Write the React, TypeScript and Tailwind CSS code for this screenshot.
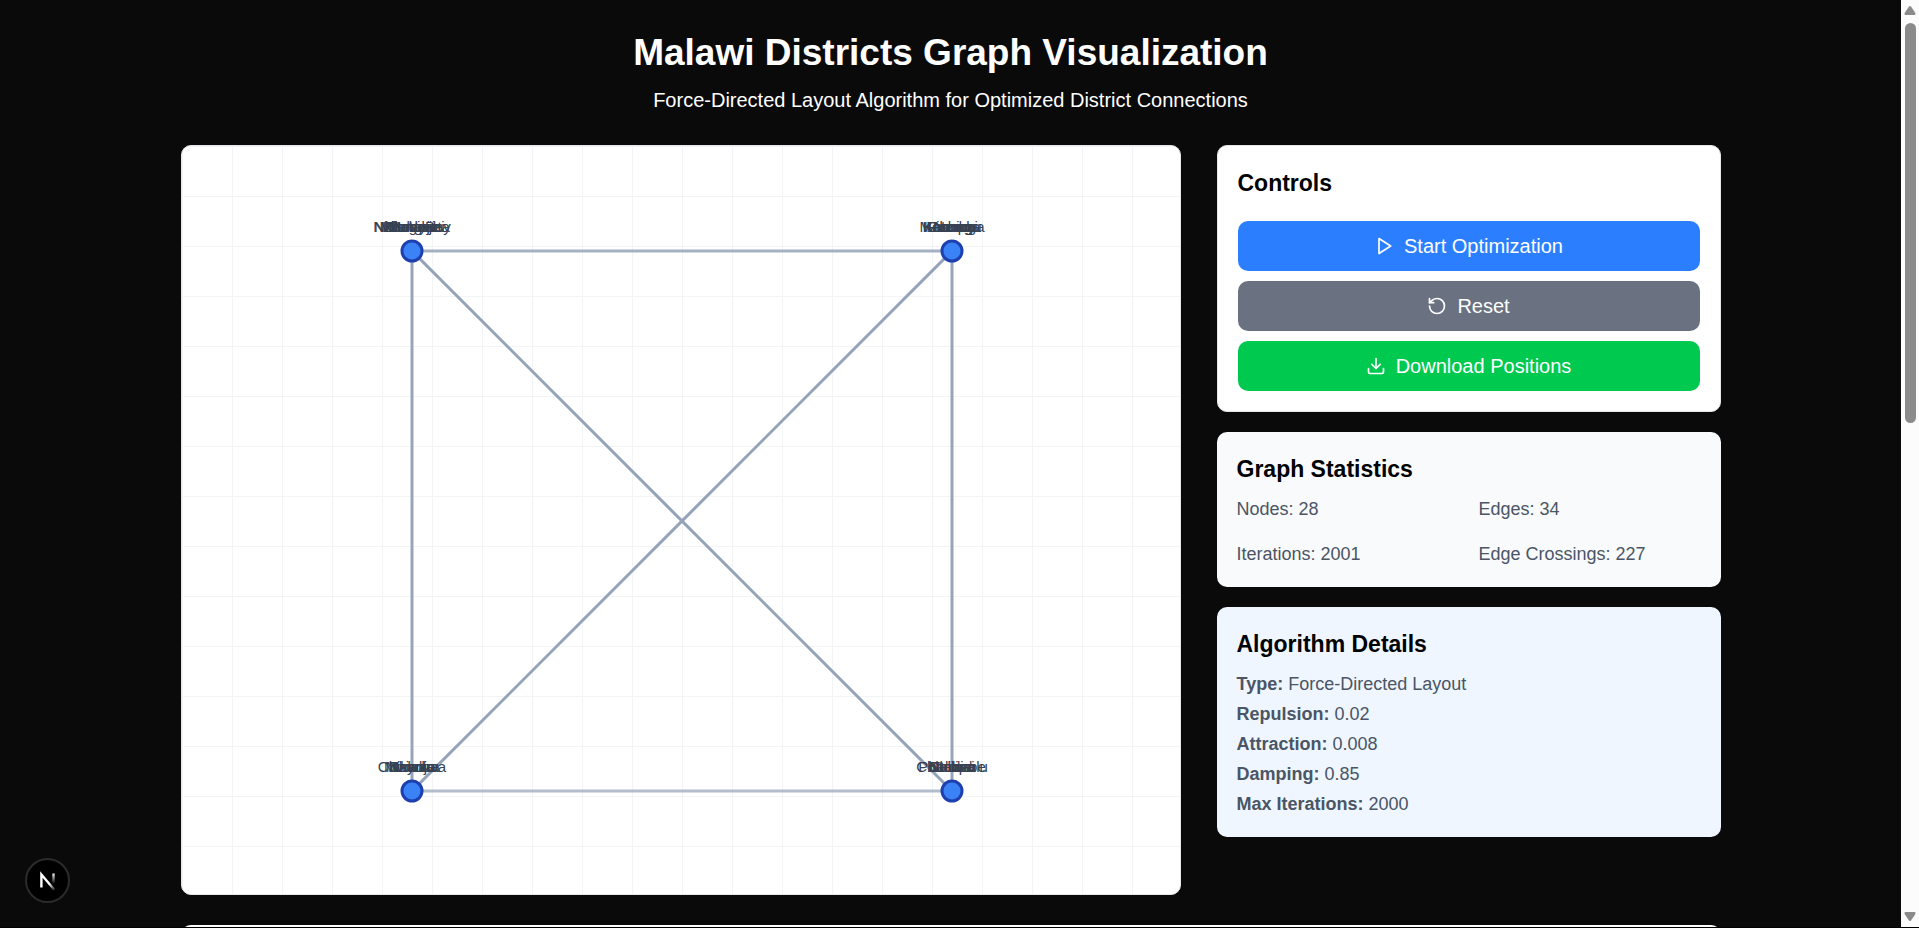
import type { ReactNode } from "react";
import { Download, RotateCcw } from "lucide-react";

type Corner = { x: number; y: number; names: string[] };

const corners: Corner[] = [
  { x: 230, y: 105, names: ["Nkhata Bay", "Nkhotakota", "Mangochi", "Mulanje", "Lilongwe", "Blantyre", "Dedza", "Mchinji"] },
  { x: 770, y: 105, names: ["Machinga", "Karonga", "Kasungu", "Rumphi", "Likoma", "Zomba", "Neno"] },
  { x: 230, y: 645, names: ["Chikwawa", "Nsanje", "Thyolo", "Balaka", "Mzimba", "Mwanza"] },
  { x: 770, y: 645, names: ["Chiradzulu", "Phalombe", "Chitipa", "Salima", "Ntcheu", "Ntchisi", "Dowa"] },
];

const edges = [
  { from: 0, to: 1, opacity: 0.84 },
  { from: 0, to: 2, opacity: 0.97 },
  { from: 0, to: 3, opacity: 1 },
  { from: 1, to: 2, opacity: 1 },
  { from: 1, to: 3, opacity: 0.97 },
  { from: 2, to: 3, opacity: 0.7 },
];

const stats = ["Nodes: 28", "Edges: 34", "Iterations: 2001", "Edge Crossings: 227"];

const details = [
  ["Type:", "Force-Directed Layout"],
  ["Repulsion:", "0.02"],
  ["Attraction:", "0.008"],
  ["Damping:", "0.85"],
  ["Max Iterations:", "2000"],
];

function Graph() {
  return (
    <svg viewBox="0 0 998 748" className="block w-full" role="img" aria-label="District graph">
      <defs>
        <pattern id="grid" width="50" height="50" patternUnits="userSpaceOnUse">
          <path d="M50 0H0V50" fill="none" stroke="#f3f4f6" strokeWidth="2" />
        </pattern>
      </defs>
      <rect width="998" height="748" fill="url(#grid)" />
      {edges.map((e) => (
        <line
          key={`${e.from}-${e.to}`}
          x1={corners[e.from].x}
          y1={corners[e.from].y}
          x2={corners[e.to].x}
          y2={corners[e.to].y}
          stroke="#94a3b8"
          strokeWidth="3"
          opacity={e.opacity}
        />
      ))}
      {corners.map((c) => (
        <g key={`${c.x}-${c.y}`}>
          <circle cx={c.x} cy={c.y} r="10" fill="#3b82f6" stroke="#1e40af" strokeWidth="3" />
          {c.names.map((name) => (
            <text key={name} x={c.x} y={c.y - 19} textAnchor="middle" fontSize="15" fill="#374151">
              {name}
            </text>
          ))}
        </g>
      ))}
    </svg>
  );
}

function ActionButton({ color, children }: { color: string; children: ReactNode }) {
  return (
    <button
      type="button"
      className={`flex h-[50px] w-full items-center justify-center gap-[10px] rounded-[10px] text-[20px] leading-[30px] text-white ${color}`}
    >
      {children}
    </button>
  );
}

function Scrollbar() {
  return (
    <div aria-hidden="true" className="flex w-[18px] shrink-0 flex-col items-center justify-between bg-[#fcfcfc] py-[5px]">
      <svg width="12" height="10" viewBox="0 0 12 10">
        <path d="M5 1.5Q6 .5 7 1.5L11.4 8Q12 10 10.5 10H1.5Q0 10 .6 8Z" fill="#8b8b8b" />
      </svg>
      <div className="flex w-full flex-1 justify-center pt-[8px]">
        <div className="h-[45%] w-[11px] rounded-full bg-[#8b8b8b]" />
      </div>
      <svg width="12" height="10" viewBox="0 0 12 10">
        <path d="M5 8.5Q6 9.5 7 8.5L11.4 2Q12 0 10.5 0H1.5Q0 0 .6 2Z" fill="#8b8b8b" />
      </svg>
    </div>
  );
}

export default function App() {
  return (
    <div className="flex h-screen overflow-hidden border-b border-black bg-[#0a0a0a] font-['Liberation_Sans',Arial,sans-serif]">
      <div className="min-w-0 flex-1 overflow-hidden">
        <main className="mx-auto max-w-[1600px] p-[30px]">
          <header className="mb-[30px] text-center text-white">
            <h1 className="mb-[10px] text-[37px] leading-[45px] font-bold">Malawi Districts Graph Visualization</h1>
            <p className="text-[20px] leading-[30px]">Force-Directed Layout Algorithm for Optimized District Connections</p>
          </header>

          <div className="grid grid-cols-[1000fr_504fr] items-start gap-9">
            <section className="overflow-hidden rounded-[10px] border border-gray-200 bg-white">
              <Graph />
            </section>

            <aside className="flex flex-col gap-5">
              <section className="rounded-[10px] border border-gray-200 bg-white p-5">
                <h2 className="mb-5 text-[23px] leading-[35px] font-bold">Controls</h2>
                <div className="flex flex-col gap-[10px]">
                  <ActionButton color="bg-[#2b7fff]">
                    <svg width="20" height="20" viewBox="0 0 24 24" fill="none" stroke="currentColor" strokeWidth="2" strokeLinecap="round" strokeLinejoin="round">
                      <polygon points="6 3 20 12 6 21 6 3" />
                    </svg>
                    Start Optimization
                  </ActionButton>
                  <ActionButton color="bg-[#6a7282]">
                    <RotateCcw size={20} />
                    Reset
                  </ActionButton>
                  <ActionButton color="bg-[#00c950]">
                    <Download size={20} />
                    Download Positions
                  </ActionButton>
                </div>
              </section>

              <section className="rounded-[10px] bg-[#f9fafb] p-5">
                <h2 className="mb-[10px] text-[23px] leading-[35px] font-bold">Graph Statistics</h2>
                <div className="grid grid-cols-2 gap-5 text-[18px] leading-[25px] text-[#4a5565]">
                  {stats.map((s) => (
                    <p key={s}>{s}</p>
                  ))}
                </div>
              </section>

              <section className="rounded-[10px] bg-[#eff6ff] p-5">
                <h2 className="mb-[10px] text-[23px] leading-[35px] font-bold">Algorithm Details</h2>
                <div className="flex flex-col gap-[5px] text-[18px] leading-[25px] text-[#4a5565]">
                  {details.map(([label, value]) => (
                    <p key={label}>
                      <strong>{label}</strong> {value}
                    </p>
                  ))}
                </div>
              </section>
            </aside>
          </div>

          <section className="mt-[30px] h-40 rounded-[10px] bg-white" />
        </main>
      </div>

      <button type="button" aria-label="Open developer tools" className="fixed bottom-[25px] left-[25px] size-[45px] rounded-full">
        <svg viewBox="0 0 45 45" className="size-full">
          <defs>
            <linearGradient id="diagonal" x1="25" y1="25" x2="31" y2="32" gradientUnits="userSpaceOnUse">
              <stop stopColor="#fff" />
              <stop offset="1" stopColor="#fff" stopOpacity="0" />
            </linearGradient>
            <linearGradient id="stem" x1="29" y1="15" x2="29" y2="26" gradientUnits="userSpaceOnUse">
              <stop stopColor="#fff" />
              <stop offset="1" stopColor="#fff" stopOpacity="0" />
            </linearGradient>
          </defs>
          <circle cx="22.5" cy="22.5" r="21.5" fill="#000" stroke="#2b2b2b" strokeWidth="2" />
          <path d="M16.4 29.5V16.5L29.5 32" fill="none" stroke="url(#diagonal)" strokeWidth="2.4" />
          <path d="M28.5 15.5V26" stroke="url(#stem)" strokeWidth="2.4" />
        </svg>
      </button>
      <Scrollbar />
    </div>
  );
}
